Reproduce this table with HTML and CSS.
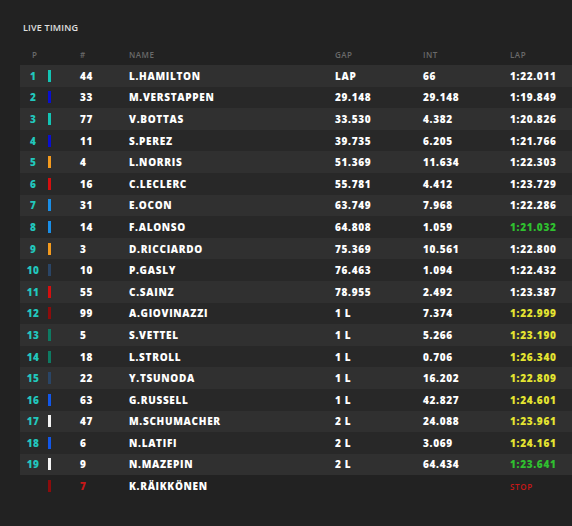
FILE: index.html
```html
<!DOCTYPE html>
<html>
<head>
<meta charset="utf-8">
<link rel="stylesheet" href="styles.css">
</head>
<body>
<div class="panel">
  <div class="title">LIVE TIMING</div>
  <div class="row head">
    <span class="pos">P</span><span></span><span>#</span><span>NAME</span><span>GAP</span><span>INT</span><span>LAP</span>
  </div>
  <div class="rows">
    <div class="row"><span class="pos">1</span><span class="bar t-merc"></span><span>44</span><span>L.HAMILTON</span><span>LAP</span><span>66</span><span>1:22.011</span></div>
    <div class="row"><span class="pos">2</span><span class="bar t-rbr"></span><span>33</span><span>M.VERSTAPPEN</span><span>29.148</span><span>29.148</span><span>1:19.849</span></div>
    <div class="row"><span class="pos">3</span><span class="bar t-merc"></span><span>77</span><span>V.BOTTAS</span><span>33.530</span><span>4.382</span><span>1:20.826</span></div>
    <div class="row"><span class="pos">4</span><span class="bar t-rbr"></span><span>11</span><span>S.PEREZ</span><span>39.735</span><span>6.205</span><span>1:21.766</span></div>
    <div class="row"><span class="pos">5</span><span class="bar t-mcl"></span><span>4</span><span>L.NORRIS</span><span>51.369</span><span>11.634</span><span>1:22.303</span></div>
    <div class="row"><span class="pos">6</span><span class="bar t-fer"></span><span>16</span><span>C.LECLERC</span><span>55.781</span><span>4.412</span><span>1:23.729</span></div>
    <div class="row"><span class="pos">7</span><span class="bar t-alp"></span><span>31</span><span>E.OCON</span><span>63.749</span><span>7.968</span><span>1:22.286</span></div>
    <div class="row"><span class="pos">8</span><span class="bar t-alp"></span><span>14</span><span>F.ALONSO</span><span>64.808</span><span>1.059</span><span class="green">1:21.032</span></div>
    <div class="row"><span class="pos">9</span><span class="bar t-mcl"></span><span>3</span><span>D.RICCIARDO</span><span>75.369</span><span>10.561</span><span>1:22.800</span></div>
    <div class="row"><span class="pos">10</span><span class="bar t-at"></span><span>10</span><span>P.GASLY</span><span>76.463</span><span>1.094</span><span>1:22.432</span></div>
    <div class="row"><span class="pos">11</span><span class="bar t-fer"></span><span>55</span><span>C.SAINZ</span><span>78.955</span><span>2.492</span><span>1:23.387</span></div>
    <div class="row"><span class="pos">12</span><span class="bar t-alfa"></span><span>99</span><span>A.GIOVINAZZI</span><span>1 L</span><span>7.374</span><span class="yellow">1:22.999</span></div>
    <div class="row"><span class="pos">13</span><span class="bar t-am"></span><span>5</span><span>S.VETTEL</span><span>1 L</span><span>5.266</span><span class="yellow">1:23.190</span></div>
    <div class="row"><span class="pos">14</span><span class="bar t-am"></span><span>18</span><span>L.STROLL</span><span>1 L</span><span>0.706</span><span class="yellow">1:26.340</span></div>
    <div class="row"><span class="pos">15</span><span class="bar t-at"></span><span>22</span><span>Y.TSUNODA</span><span>1 L</span><span>16.202</span><span class="yellow">1:22.809</span></div>
    <div class="row"><span class="pos">16</span><span class="bar t-wil"></span><span>63</span><span>G.RUSSELL</span><span>1 L</span><span>42.827</span><span class="yellow">1:24.601</span></div>
    <div class="row"><span class="pos">17</span><span class="bar t-haas"></span><span>47</span><span>M.SCHUMACHER</span><span>2 L</span><span>24.088</span><span class="yellow">1:23.961</span></div>
    <div class="row"><span class="pos">18</span><span class="bar t-wil"></span><span>6</span><span>N.LATIFI</span><span>2 L</span><span>3.069</span><span class="yellow">1:24.161</span></div>
    <div class="row"><span class="pos">19</span><span class="bar t-haas"></span><span>9</span><span>N.MAZEPIN</span><span>2 L</span><span>64.434</span><span class="green">1:23.641</span></div>
    <div class="row out"><span class="pos"></span><span class="bar t-alfa"></span><span class="red">7</span><span>K.RÄIKKÖNEN</span><span></span><span></span><span class="red stop">STOP</span></div>
  </div>
</div>
</body>
</html>
```
FILE: styles.css
```css
html, body {
  margin: 0;
  padding: 0;
  background: #222222;
}
body {
  width: 572px;
  height: 526px;
  overflow: hidden;
  font-family: "Open Sans", "DejaVu Sans", sans-serif;
  color: #ffffff;
}
.panel {
  padding: 20px 0 0 20px;
}
.title {
  font-size: 9px;
  font-weight: 600;
  color: #e0e0e0;
  padding-left: 3px;
  letter-spacing: 0.2px;
  height: 15px;
  line-height: 15px;
  margin-bottom: 11px;
}
.row {
  display: grid;
  grid-template-columns: 26px 34px 49px 206px 88px 87px 1fr;
  align-items: center;
  height: 21.6px;
  font-size: 10px;
  font-weight: 800;
  letter-spacing: 0.7px;
  white-space: nowrap;
}
.row.head {
  height: 16px;
  font-size: 8px;
  font-weight: 600;
  color: #6a6a6a;
  letter-spacing: 0.5px;
  margin-bottom: 3px;
}
.rows .row:nth-child(odd) { background: #303030; }
.rows .row:nth-child(even) { background: #282828; }
.rows .row.out { background: transparent; }
.pos {
  text-align: center;
  color: #22c7bd;
  letter-spacing: 0.3px;
}
.head .pos { color: #6a6a6a; padding-left: 3px; }
.bar {
  display: block;
  width: 3px;
  height: 12px;
  margin-left: 2px;
}
.t-merc { background: #13c4b4; }
.t-rbr { background: #0a0fcf; }
.t-mcl { background: #f39a1e; }
.t-fer { background: #d40f0f; }
.t-alp { background: #1a8ee6; }
.t-at { background: #2a4566; }
.t-alfa { background: #8c0c0c; }
.t-am { background: #0e7a62; }
.t-wil { background: #1257e8; }
.t-haas { background: #f4f4f4; }
.green { color: #2fc02f; }
.yellow { color: #e4e431; }
.red { color: #c81818; }
.stop { font-size: 8px; font-weight: 600; }
```
